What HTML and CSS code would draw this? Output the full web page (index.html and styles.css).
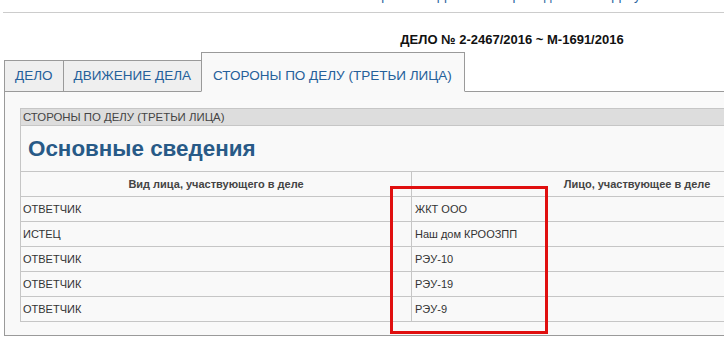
FILE: index.html
```html
<!DOCTYPE html>
<html lang="ru">
<head>
<meta charset="utf-8">
<title>ДЕЛО № 2-2467/2016</title>
<link rel="stylesheet" href="styles.css">
</head>
<body>
<div class="toplinks"><div class="toplinks-inner"><a class="toplink">Приемная</a><a class="toplink link-2">Дела</a><a class="toplink link-3">Архив дел</a><a class="toplink link-4">Документы</a></div></div>
<div class="topline"></div>
<div class="case-title">ДЕЛО № 2-2467/2016 ~ М-1691/2016</div>
<div class="tabs">
  <div class="tab">ДЕЛО</div>
  <div class="tab">ДВИЖЕНИЕ ДЕЛА</div>
  <div class="tab tab-active">СТОРОНЫ ПО ДЕЛУ (ТРЕТЬИ ЛИЦА)</div>
</div>
<div class="panel">
  <table class="parties">
    <tr class="caption-row"><td colspan="2">СТОРОНЫ ПО ДЕЛУ (ТРЕТЬИ ЛИЦА)</td></tr>
    <tr class="title-row"><td colspan="2">Основные сведения</td></tr>
    <tr class="head-row"><th class="col1">Вид лица, участвующего в деле</th><th>Лицо, участвующее в деле</th></tr>
    <tr><td>ОТВЕТЧИК</td><td class="col2">ЖКТ ООО</td></tr>
    <tr><td>ИСТЕЦ</td><td class="col2">Наш дом КРООЗПП</td></tr>
    <tr><td>ОТВЕТЧИК</td><td class="col2">РЭУ-10</td></tr>
    <tr><td>ОТВЕТЧИК</td><td class="col2">РЭУ-19</td></tr>
    <tr><td>ОТВЕТЧИК</td><td class="col2">РЭУ-9</td></tr>
  </table>
</div>
<div class="highlight"></div>
</body>
</html>
```
FILE: styles.css
```css
html, body {
  margin: 0;
  padding: 0;
  overflow: hidden;
  background: #ffffff;
  font-family: "Liberation Sans", Arial, sans-serif;
}
body {
  position: relative;
  width: 724px;
  height: 346px;
}
.toplinks {
  height: 12px;
  overflow: hidden;
}
.toplinks-inner {
  margin-top: -11px;
  padding-left: 372px;
  display: flex;
  font-size: 13px;
  line-height: 13px;
  white-space: nowrap;
}
.toplink {
  color: #2a64a0;
}
.link-2 {
  margin-left: 4px;
}
.link-3 {
  margin-left: 36px;
}
.link-4 {
  margin-left: 46px;
}
.topline {
  margin-left: 3px;
  border-top: 1px solid #cccccc;
}
.case-title {
  padding: 14px 0 0 300px;
  height: 25px;
  line-height: 25px;
  text-align: center;
  font-size: 13px;
  font-weight: bold;
  color: #111111;
  white-space: nowrap;
}
.tabs {
  display: flex;
  align-items: flex-end;
  padding-left: 4px;
  margin-bottom: -1px;
  position: relative;
  z-index: 1;
}
.tab {
  height: 30px;
  line-height: 30px;
  padding: 0 10px;
  border: 1px solid #9a9a9a;
  border-right: none;
  background: #efefef;
  color: #25609a;
  font-size: 13.5px;
  white-space: nowrap;
}
.tab-active {
  height: 30px;
  padding: 8px 12px 0 11px;
  border-right: 1px solid #9a9a9a;
  border-bottom-color: #f9f9f9;
  background: #f9f9f9;
}
.panel {
  margin-left: 4px;
  width: 900px;
  border: 1px solid #9a9a9a;
  background: #f9f9f9;
  padding: 16px 0 13px 15px;
}
.parties {
  border-collapse: collapse;
  width: 843px;
  font-size: 11px;
  color: #333333;
}
.parties td, .parties th {
  border: 1px solid #c6c6c6;
  padding: 0 2px;
  height: 24px;
  text-align: left;
  white-space: nowrap;
}
.caption-row td {
  height: 16px;
  background: #dddddd;
  color: #444444;
  font-size: 11.4px;
}
.title-row td {
  height: 45px;
  padding-left: 7px;
  font-size: 22.4px;
  font-weight: bold;
  color: #285a87;
}
.head-row th {
  text-align: center;
  font-weight: bold;
  color: #444444;
}
.col1 {
  width: 386px;
}
.parties td.col2 {
  padding-left: 3px;
}
.highlight {
  position: absolute;
  left: 390px;
  top: 186px;
  width: 152px;
  height: 142px;
  border: 3px solid #e00f0f;
}
```
